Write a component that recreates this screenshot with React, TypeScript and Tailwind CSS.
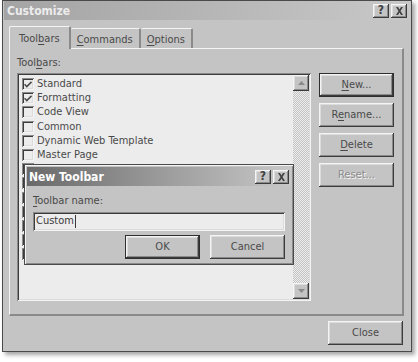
import React from "react";

const raised =
  "bg-[#c4c4c4] shadow-[inset_-1px_-1px_#3c3c3c,inset_1px_1px_#f4f4f4,inset_-2px_-2px_#8a8a8a,inset_2px_2px_#dcdcdc]";
const sunken =
  "shadow-[inset_1px_1px_#8a8a8a,inset_-1px_-1px_#f4f4f4,inset_2px_2px_#3c3c3c,inset_-2px_-2px_#dcdcdc]";

const toolbars = [
  { name: "Standard", on: true },
  { name: "Formatting", on: true },
  { name: "Code View", on: false },
  { name: "Common", on: false },
  { name: "Dynamic Web Template", on: false },
  { name: "Master Page", on: false },
  { name: "Navigation", on: true },
  { name: "Pictures", on: false },
  { name: "Positioning", on: false },
  { name: "Style", on: false },
  { name: "Tables", on: false },
  { name: "Task Pane", on: false },
  { name: "Web Components", on: false },
];

function TitleButton({ kind }: { kind: "help" | "close" }) {
  return (
    <div className={`w-[16px] h-[14px] flex items-center justify-center ${raised}`}>
      {kind === "help" ? (
        <span className="text-[12px] leading-none font-bold text-[#404040] -mt-[1px]">?</span>
      ) : (
        <svg width="9" height="8" viewBox="0 0 9 8">
          <path d="M1 0h2l1.5 2.5L6 0h2L5.5 4 8 8H6L4.5 5.5 3 8H1l2.5-4z" fill="#404040" />
        </svg>
      )}
    </div>
  );
}

function Btn({
  label,
  u,
  rest,
  pre = "",
  def = false,
  disabled = false,
  className = "",
}: {
  label?: string;
  u?: string;
  rest?: string;
  pre?: string;
  def?: boolean;
  disabled?: boolean;
  className?: string;
}) {
  return (
    <div
      className={`h-[24px] w-[75px] flex items-center justify-center ${
        def ? "border border-[#2e2e2e]" : ""
      } ${raised} ${className}`}
    >
      <span
        className={
          disabled
            ? "text-[#8c8c8c] [text-shadow:1px_1px_#f4f4f4]"
            : "text-[#4a4a4a]"
        }
      >
        {pre}
        {u ? <span className="underline underline-offset-2">{u}</span> : null}
        {rest}
        {label}
      </span>
    </div>
  );
}

function Check({ on }: { on: boolean }) {
  return (
    <div className={`w-[12px] h-[12px] bg-[#ececec] flex items-center justify-center ${sunken}`}>
      {on && (
        <svg width="8" height="7" viewBox="0 0 8 7">
          <path d="M0.5 3.2l2.3 2.3L7.5 0.8" stroke="#4a4a4a" strokeWidth="1.6" fill="none" />
        </svg>
      )}
    </div>
  );
}

export default function App() {
  return (
    <div
      className="w-[418px] h-[362px] bg-white relative overflow-hidden text-[11px] text-[#4a4a4a]"
      style={{ fontFamily: '"DejaVu Sans Condensed", "Liberation Sans", Arial, sans-serif' }}
    >
      <div className="ml-[2px] w-[410px] h-[352px] bg-[#c4c4c4] border border-[#4a4a4a] shadow-[3px_3px_4px_rgba(0,0,0,0.35)] flex flex-col">
        {/* title bar */}
        <div className="h-[19px] mx-[1px] flex items-center justify-between pl-[3px] pr-[3px] bg-gradient-to-r from-[#a4a4a4] to-[#c8c8c8]">
          <span className="text-[12px] font-bold text-[#ececec]">Customize</span>
          <div className="flex gap-[2px]">
            <TitleButton kind="help" />
            <TitleButton kind="close" />
          </div>
        </div>

        {/* tabs */}
        <div className="mt-[5px] ml-[6px] flex items-end h-[23px]">
          <div className="h-[23px] px-[9px] pt-[4px] bg-[#c4c4c4] border-l border-t border-[#f4f4f4] border-r-2 border-r-[#8a8a8a] rounded-t-[2px] relative z-10 -mb-[1px]">
            Tool<span className="underline underline-offset-2">b</span>ars
          </div>
          <div className="h-[20px] px-[6px] pt-[3px] border-t border-[#f4f4f4] border-r-2 border-r-[#8a8a8a] rounded-t-[2px]">
            <span className="underline underline-offset-2">C</span>ommands
          </div>
          <div className="h-[20px] px-[6px] pt-[3px] border-t border-[#f4f4f4] border-r-2 border-r-[#8a8a8a] rounded-t-[2px]">
            <span className="underline underline-offset-2">O</span>ptions
          </div>
        </div>

        {/* tab panel */}
        <div className="ml-[6px] mr-[7px] h-[268px] border-l border-t border-[#f4f4f4] border-r-2 border-b-2 border-r-[#8a8a8a] border-b-[#8a8a8a] flex pl-[7px] pt-[7px]">
          <div className="flex flex-col">
            <div className="h-[14px] leading-[14px]">
              Tool<span className="underline underline-offset-2">b</span>ars:
            </div>
            <div className={`mt-[3px] w-[294px] h-[228px] bg-[#ececec] flex p-[2px] ${sunken}`}>
              <div className="flex-1 overflow-hidden pl-[3px] pt-[2px]">
                {toolbars.map((t) => (
                  <div key={t.name} className="h-[14.2px] flex items-center gap-[3px]">
                    <Check on={t.on} />
                    <span className="leading-[14px]">{t.name}</span>
                  </div>
                ))}
              </div>
              <div className="w-[16px] flex flex-col bg-[repeating-conic-gradient(#c4c4c4_0%_25%,#ececec_0%_50%)] bg-[length:2px_2px]">
                <div className={`h-[16px] flex items-center justify-center ${raised}`}>
                  <svg width="7" height="4" viewBox="0 0 7 4">
                    <path d="M3.5 0L7 4H0z" fill="#8a8a8a" />
                  </svg>
                </div>
                <div className="flex-1" />
                <div className={`h-[16px] flex items-center justify-center ${raised}`}>
                  <svg width="7" height="4" viewBox="0 0 7 4">
                    <path d="M0 0h7L3.5 4z" fill="#8a8a8a" />
                  </svg>
                </div>
              </div>
            </div>
          </div>
          <div className="ml-[8px] mt-[17px] flex flex-col gap-[6px]">
            <Btn def u="N" rest="ew..." />
            <Btn pre="R" u="e" rest="name..." />
            <Btn u="D" rest="elete" />
            <Btn disabled label="Reset..." />
          </div>
        </div>

        <div className="flex justify-end mt-[5px] mr-[8px]">
          <Btn label="Close" />
        </div>
      </div>

      {/* New Toolbar dialog (overlay) */}
      <div className="absolute left-[24px] top-[164px] w-[270px] h-[101px] bg-[#c4c4c4] border border-[#4a4a4a] shadow-[inset_1px_1px_#f4f4f4,inset_-1px_-1px_#8a8a8a] flex flex-col">
        <div className="h-[19px] mx-[2px] mt-[2px] flex items-center justify-between pl-[2px] pr-[2px] bg-gradient-to-r from-[#6a6a6a] via-[#9a9a9a] to-[#c8c8c8]">
          <span className="text-[12px] font-bold text-white">New Toolbar</span>
          <div className="flex gap-[2px]">
            <TitleButton kind="help" />
            <TitleButton kind="close" />
          </div>
        </div>
        <div className="px-[8px] mt-[8px] leading-[14px]">
          <span className="underline underline-offset-2">T</span>oolbar name:
        </div>
        <div className={`mx-[8px] mt-[4px] h-[19px] bg-[#ececec] flex items-center pl-[3px] ${sunken}`}>
          <span className="text-[#3a3a3a]">Custom</span>
          <span className="w-[1px] h-[13px] bg-[#3a3a3a] ml-[1px]" />
        </div>
        <div className="flex justify-end gap-[10px] mx-[8px] mt-[4px]">
          <Btn def label="OK" />
          <Btn label="Cancel" />
        </div>
      </div>
    </div>
  );
}
